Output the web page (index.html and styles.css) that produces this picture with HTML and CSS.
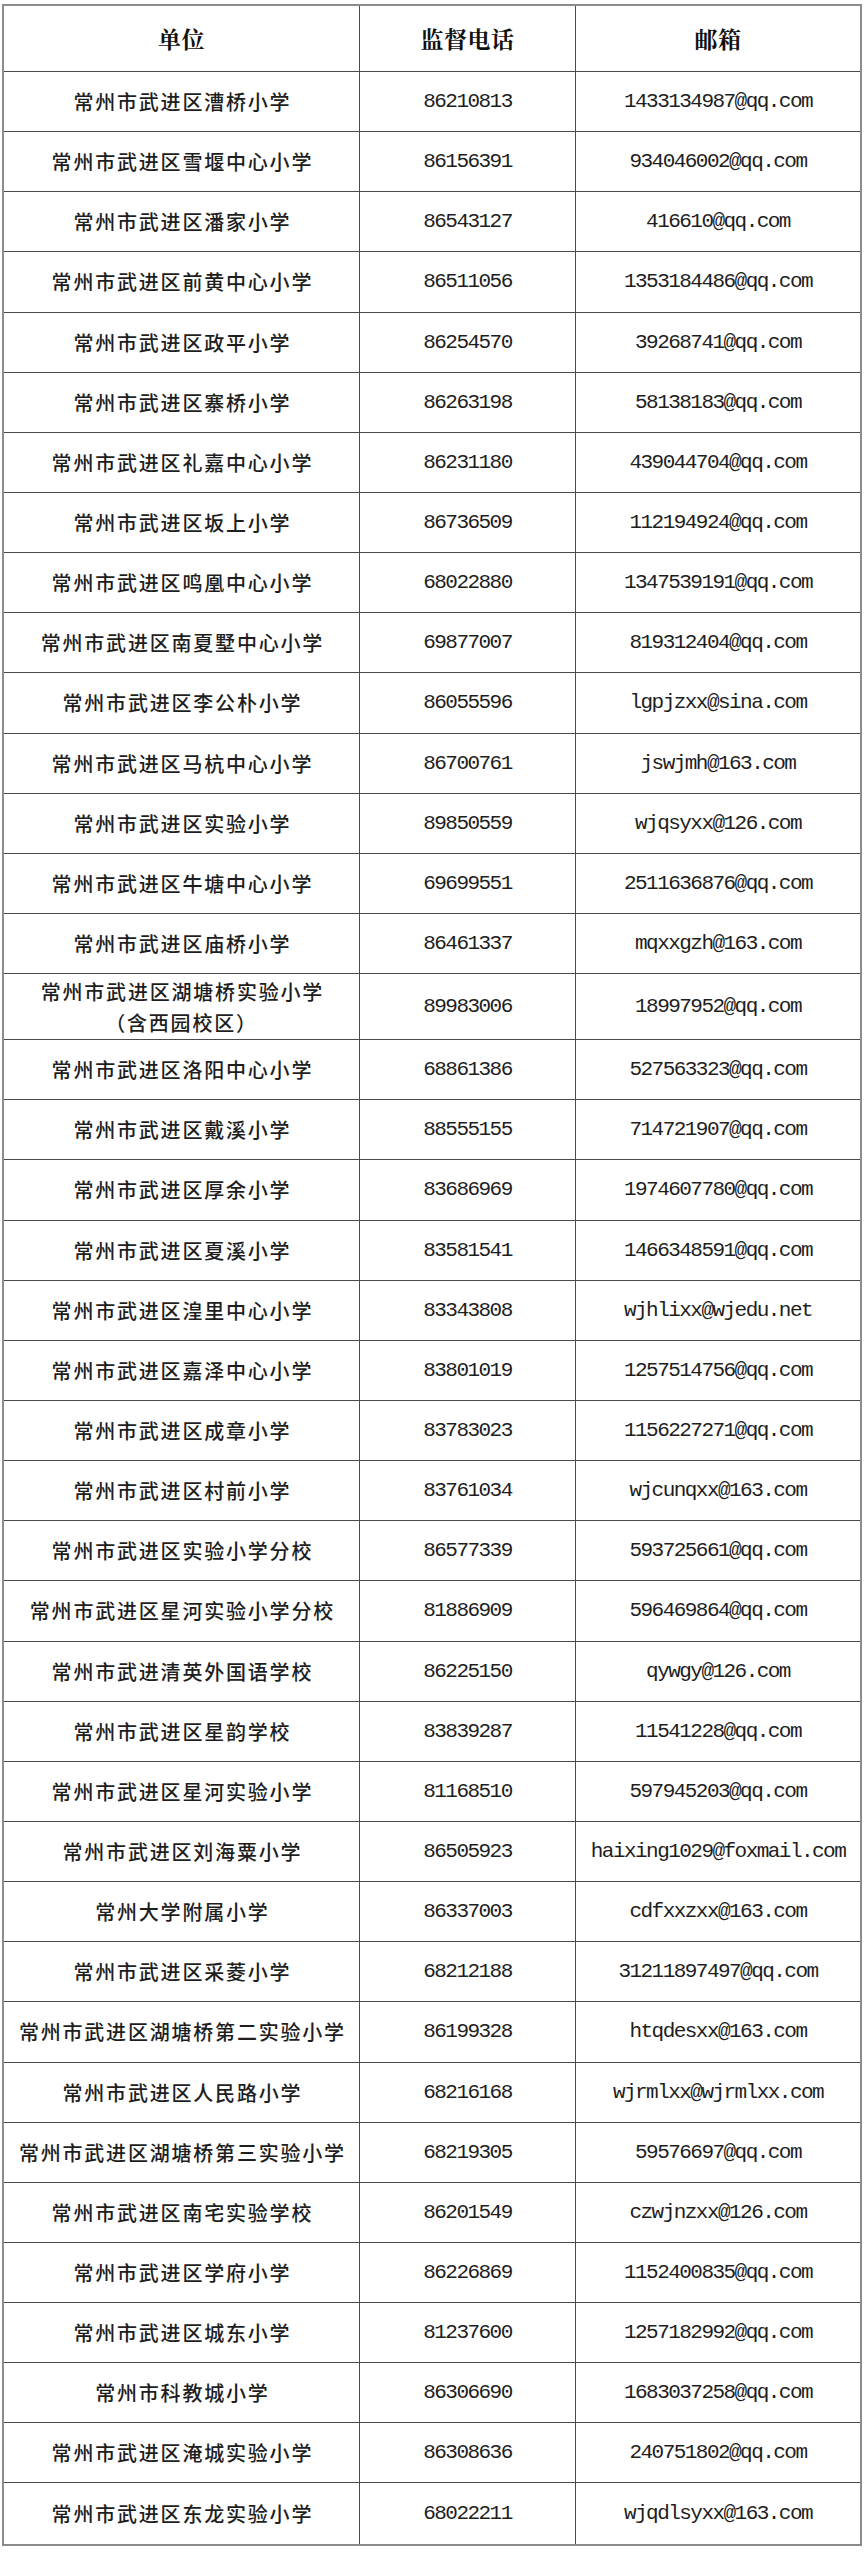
FILE: index.html
```html
<!DOCTYPE html>
<html lang="zh-CN">
<head>
<meta charset="utf-8">
<title>监督电话</title>
<link rel="stylesheet" href="styles.css">
</head>
<body>
<div class="sheet">
  <div class="row head"><div class="cell">单位</div><div class="cell">监督电话</div><div class="cell">邮箱</div></div>
  <div class="row"><div class="cell name">常州市武进区漕桥小学</div><div class="cell num">86210813</div><div class="cell mail">1433134987@qq.com</div></div>
  <div class="row"><div class="cell name">常州市武进区雪堰中心小学</div><div class="cell num">86156391</div><div class="cell mail">934046002@qq.com</div></div>
  <div class="row"><div class="cell name">常州市武进区潘家小学</div><div class="cell num">86543127</div><div class="cell mail">416610@qq.com</div></div>
  <div class="row"><div class="cell name">常州市武进区前黄中心小学</div><div class="cell num">86511056</div><div class="cell mail">1353184486@qq.com</div></div>
  <div class="row"><div class="cell name">常州市武进区政平小学</div><div class="cell num">86254570</div><div class="cell mail">39268741@qq.com</div></div>
  <div class="row"><div class="cell name">常州市武进区寨桥小学</div><div class="cell num">86263198</div><div class="cell mail">58138183@qq.com</div></div>
  <div class="row"><div class="cell name">常州市武进区礼嘉中心小学</div><div class="cell num">86231180</div><div class="cell mail">439044704@qq.com</div></div>
  <div class="row"><div class="cell name">常州市武进区坂上小学</div><div class="cell num">86736509</div><div class="cell mail">112194924@qq.com</div></div>
  <div class="row"><div class="cell name">常州市武进区鸣凰中心小学</div><div class="cell num">68022880</div><div class="cell mail">1347539191@qq.com</div></div>
  <div class="row"><div class="cell name">常州市武进区南夏墅中心小学</div><div class="cell num">69877007</div><div class="cell mail">819312404@qq.com</div></div>
  <div class="row"><div class="cell name">常州市武进区李公朴小学</div><div class="cell num">86055596</div><div class="cell mail">lgpjzxx@sina.com</div></div>
  <div class="row"><div class="cell name">常州市武进区马杭中心小学</div><div class="cell num">86700761</div><div class="cell mail">jswjmh@163.com</div></div>
  <div class="row"><div class="cell name">常州市武进区实验小学</div><div class="cell num">89850559</div><div class="cell mail">wjqsyxx@126.com</div></div>
  <div class="row"><div class="cell name">常州市武进区牛塘中心小学</div><div class="cell num">69699551</div><div class="cell mail">2511636876@qq.com</div></div>
  <div class="row"><div class="cell name">常州市武进区庙桥小学</div><div class="cell num">86461337</div><div class="cell mail">mqxxgzh@163.com</div></div>
  <div class="row tall"><div class="cell name">常州市武进区湖塘桥实验小学<br>（含西园校区）</div><div class="cell num">89983006</div><div class="cell mail">18997952@qq.com</div></div>
  <div class="row"><div class="cell name">常州市武进区洛阳中心小学</div><div class="cell num">68861386</div><div class="cell mail">527563323@qq.com</div></div>
  <div class="row"><div class="cell name">常州市武进区戴溪小学</div><div class="cell num">88555155</div><div class="cell mail">714721907@qq.com</div></div>
  <div class="row"><div class="cell name">常州市武进区厚余小学</div><div class="cell num">83686969</div><div class="cell mail">1974607780@qq.com</div></div>
  <div class="row"><div class="cell name">常州市武进区夏溪小学</div><div class="cell num">83581541</div><div class="cell mail">1466348591@qq.com</div></div>
  <div class="row"><div class="cell name">常州市武进区湟里中心小学</div><div class="cell num">83343808</div><div class="cell mail">wjhlixx@wjedu.net</div></div>
  <div class="row"><div class="cell name">常州市武进区嘉泽中心小学</div><div class="cell num">83801019</div><div class="cell mail">1257514756@qq.com</div></div>
  <div class="row"><div class="cell name">常州市武进区成章小学</div><div class="cell num">83783023</div><div class="cell mail">1156227271@qq.com</div></div>
  <div class="row"><div class="cell name">常州市武进区村前小学</div><div class="cell num">83761034</div><div class="cell mail">wjcunqxx@163.com</div></div>
  <div class="row"><div class="cell name">常州市武进区实验小学分校</div><div class="cell num">86577339</div><div class="cell mail">593725661@qq.com</div></div>
  <div class="row"><div class="cell name">常州市武进区星河实验小学分校</div><div class="cell num">81886909</div><div class="cell mail">596469864@qq.com</div></div>
  <div class="row"><div class="cell name">常州市武进清英外国语学校</div><div class="cell num">86225150</div><div class="cell mail">qywgy@126.com</div></div>
  <div class="row"><div class="cell name">常州市武进区星韵学校</div><div class="cell num">83839287</div><div class="cell mail">11541228@qq.com</div></div>
  <div class="row"><div class="cell name">常州市武进区星河实验小学</div><div class="cell num">81168510</div><div class="cell mail">597945203@qq.com</div></div>
  <div class="row"><div class="cell name">常州市武进区刘海粟小学</div><div class="cell num">86505923</div><div class="cell mail">haixing1029@foxmail.com</div></div>
  <div class="row"><div class="cell name">常州大学附属小学</div><div class="cell num">86337003</div><div class="cell mail">cdfxxzxx@163.com</div></div>
  <div class="row"><div class="cell name">常州市武进区采菱小学</div><div class="cell num">68212188</div><div class="cell mail">31211897497@qq.com</div></div>
  <div class="row"><div class="cell name">常州市武进区湖塘桥第二实验小学</div><div class="cell num">86199328</div><div class="cell mail">htqdesxx@163.com</div></div>
  <div class="row"><div class="cell name">常州市武进区人民路小学</div><div class="cell num">68216168</div><div class="cell mail">wjrmlxx@wjrmlxx.com</div></div>
  <div class="row"><div class="cell name">常州市武进区湖塘桥第三实验小学</div><div class="cell num">68219305</div><div class="cell mail">59576697@qq.com</div></div>
  <div class="row"><div class="cell name">常州市武进区南宅实验学校</div><div class="cell num">86201549</div><div class="cell mail">czwjnzxx@126.com</div></div>
  <div class="row"><div class="cell name">常州市武进区学府小学</div><div class="cell num">86226869</div><div class="cell mail">1152400835@qq.com</div></div>
  <div class="row"><div class="cell name">常州市武进区城东小学</div><div class="cell num">81237600</div><div class="cell mail">1257182992@qq.com</div></div>
  <div class="row"><div class="cell name">常州市科教城小学</div><div class="cell num">86306690</div><div class="cell mail">1683037258@qq.com</div></div>
  <div class="row"><div class="cell name">常州市武进区淹城实验小学</div><div class="cell num">86308636</div><div class="cell mail">240751802@qq.com</div></div>
  <div class="row"><div class="cell name">常州市武进区东龙实验小学</div><div class="cell num">68022211</div><div class="cell mail">wjqdlsyxx@163.com</div></div>
</div>
</body>
</html>
```
FILE: styles.css
```css
html, body {
  margin: 0;
  background: #ffffff;
}
body {
  padding: 4px 0 0 2px;
  width: 864px;
  box-sizing: border-box;
}
.sheet {
  width: 860px;
  border: 2px solid #8c8c8c;
  box-sizing: border-box;
  color: #1e1e1e;
}
.row {
  display: grid;
  grid-template-columns: 356px 216px 284px;
  height: 60.15px;
  border-bottom: 1px solid #4a4a4a;
  box-sizing: border-box;
}
.row:last-child {
  border-bottom: 0;
}
.row.head {
  height: 66px;
}
.row.tall {
  height: 66px;
}
.cell {
  display: flex;
  align-items: center;
  justify-content: center;
  text-align: center;
  border-right: 1px solid #4a4a4a;
  box-sizing: border-box;
}
.cell:last-child {
  border-right: 0;
}
.head .cell {
  font-family: "Noto Serif CJK SC", "Noto Sans CJK SC", serif;
  font-weight: 700;
  font-size: 23px;
  letter-spacing: 0.5px;
  color: #111111;
}
.name {
  font-family: "Noto Sans CJK SC", sans-serif;
  font-weight: 500;
  font-size: 20px;
  letter-spacing: 1.8px;
  text-indent: 1.8px;
  line-height: 31px;
}
.num, .mail {
  font-family: "Liberation Mono", monospace;
  font-size: 21px;
  letter-spacing: -1.54px;
}
```
